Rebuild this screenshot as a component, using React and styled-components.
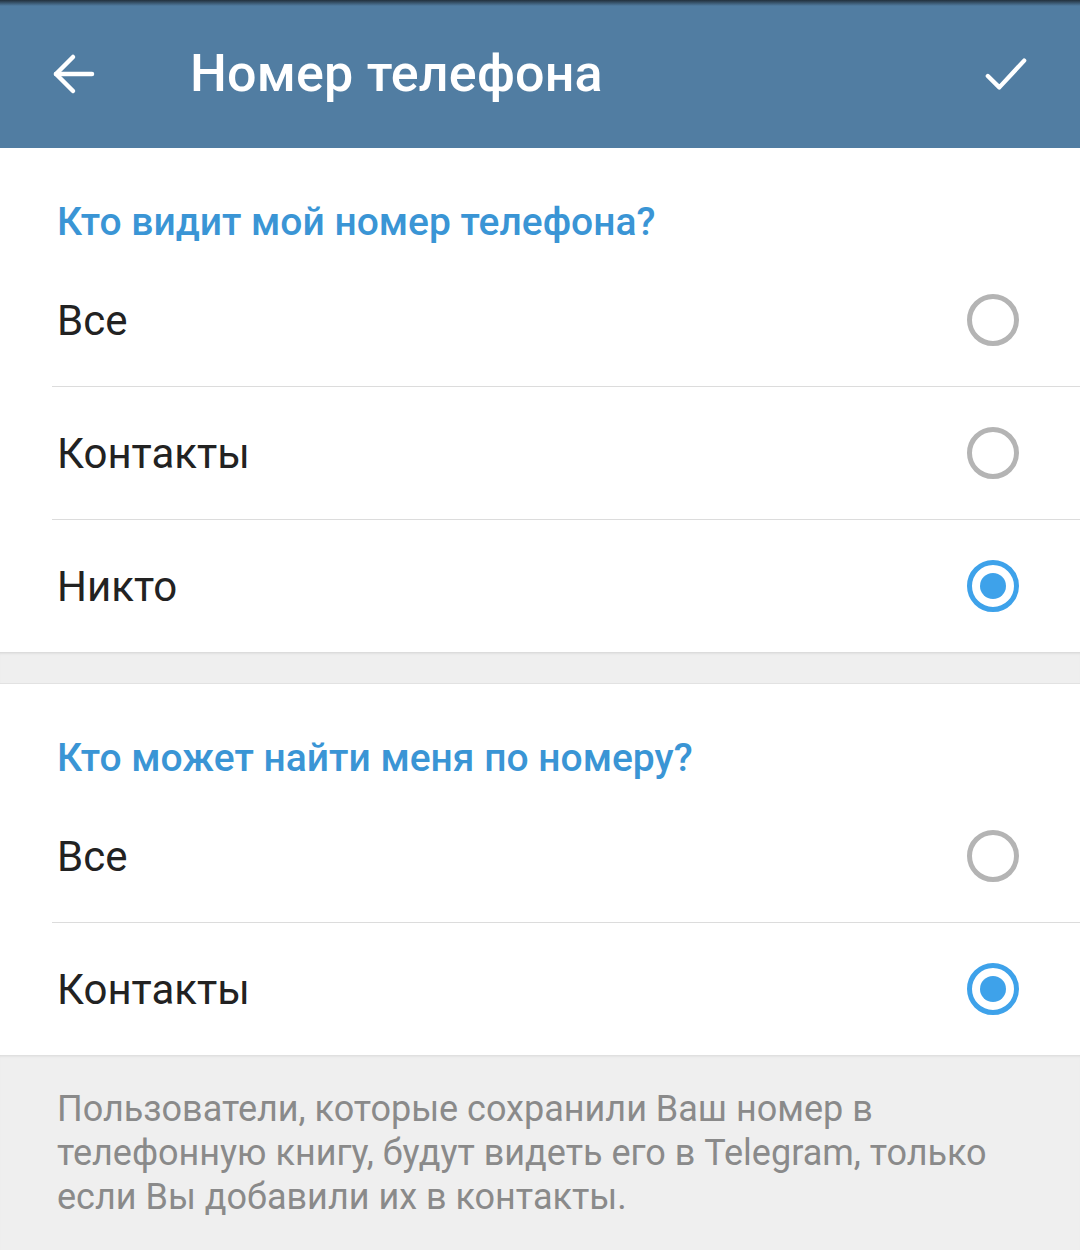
import React from 'react';
import styled, { createGlobalStyle } from 'styled-components';

const COLORS = {
  bar: '#517da2',
  accent: '#3a95d5',
  radio: '#3ea2ea',
  radioOff: '#b4b4b4',
  text: '#222222',
  hint: '#8a8a8a',
  divider: '#dcdcdc',
  backdrop: '#efefef',
};

const GlobalStyle = createGlobalStyle`
  html, body {
    margin: 0;
    padding: 0;
    background: ${COLORS.backdrop};
    font-family: Roboto, "Noto Sans", "Liberation Sans", sans-serif;
  }
`;

const Screen = styled.div`
  width: 1080px;
  min-height: 1250px;
  background: ${COLORS.backdrop};
  display: flex;
  flex-direction: column;
`;

const AppBar = styled.header`
  height: 148px;
  box-sizing: border-box;
  display: flex;
  align-items: center;
  padding: 0 52px;
  background: linear-gradient(to bottom, #22303c 0px, ${COLORS.bar} 6px);
  color: #fff;
`;

const IconButton = styled.button`
  display: flex;
  align-items: center;
  justify-content: center;
  width: 44px;
  height: 44px;
  padding: 0;
  border: none;
  background: none;
  color: #fff;
  cursor: pointer;
`;

const Title = styled.h1`
  flex: 1;
  margin: 0 0 0 94px;
  font-size: 52px;
  font-weight: 500;
  line-height: 1;
  letter-spacing: 0.2px;
`;

const Card = styled.section`
  background: #fff;
`;

const SectionTitle = styled.h2`
  margin: 0;
  padding: 54px 0 12px 57px;
  font-size: 39px;
  line-height: 40px;
  font-weight: 500;
  color: ${COLORS.accent};
`;

const Option = styled.label`
  display: flex;
  align-items: center;
  justify-content: space-between;
  height: 132px;
  margin-left: 52px;
  padding: 0 61px 0 5px;
  font-size: 42px;
  color: ${COLORS.text};
  cursor: pointer;

  & + & {
    border-top: 1px solid ${COLORS.divider};
  }
`;

const Radio = styled.span`
  position: relative;
  width: 52px;
  height: 52px;
  box-sizing: border-box;
  border-radius: 50%;
  border: 5px solid ${(p) => (p.$checked ? COLORS.radio : COLORS.radioOff)};

  &::after {
    content: '';
    display: ${(p) => (p.$checked ? 'block' : 'none')};
    position: absolute;
    left: 8px;
    top: 8px;
    width: 26px;
    height: 26px;
    border-radius: 50%;
    background: ${COLORS.radio};
  }
`;

const Gap = styled.div`
  height: 32px;
  box-shadow: inset 0 3px 3px -2px rgba(0, 0, 0, 0.12);
  border-bottom: 1px solid #e2e2e2;
  box-sizing: border-box;
`;

const Hint = styled.p`
  margin: 0;
  padding: 32px 30px 40px 57px;
  font-size: 36px;
  line-height: 44px;
  color: ${COLORS.hint};
  box-shadow: inset 0 3px 3px -2px rgba(0, 0, 0, 0.1);
`;

function Choice({ label, checked }) {
  return (
    <Option>
      <span>{label}</span>
      <Radio $checked={checked} />
    </Option>
  );
}

const sections = [
  {
    title: 'Кто видит мой номер телефона?',
    options: ['Все', 'Контакты', 'Никто'],
    selected: 'Никто',
  },
  {
    title: 'Кто может найти меня по номеру?',
    options: ['Все', 'Контакты'],
    selected: 'Контакты',
  },
];

export default function App() {
  return (
    <Screen>
      <GlobalStyle />
      <AppBar>
        <IconButton aria-label="Назад">
          <svg width="44" height="44" viewBox="0 0 44 44" fill="none" stroke="currentColor" strokeWidth="4.5" strokeLinecap="round" strokeLinejoin="round">
            <path d="M40 22H4" />
            <path d="M21 5L4 22l17 17" />
          </svg>
        </IconButton>
        <Title>Номер телефона</Title>
        <IconButton aria-label="Готово">
          <svg width="46" height="44" viewBox="0 0 46 44" fill="none" stroke="currentColor" strokeWidth="4.5" strokeLinecap="round" strokeLinejoin="round">
            <path d="M4 24l12 12L42 8" />
          </svg>
        </IconButton>
      </AppBar>

      {sections.map((s, i) => (
        <React.Fragment key={s.title}>
          {i > 0 && <Gap />}
          <Card>
            <SectionTitle>{s.title}</SectionTitle>
            {s.options.map((o) => (
              <Choice key={o} label={o} checked={o === s.selected} />
            ))}
          </Card>
        </React.Fragment>
      ))}

      <Hint>
        Пользователи, которые сохранили Ваш номер в<br />
        телефонную книгу, будут видеть его в Telegram, только<br />
        если Вы добавили их в контакты.
      </Hint>
    </Screen>
  );
}
